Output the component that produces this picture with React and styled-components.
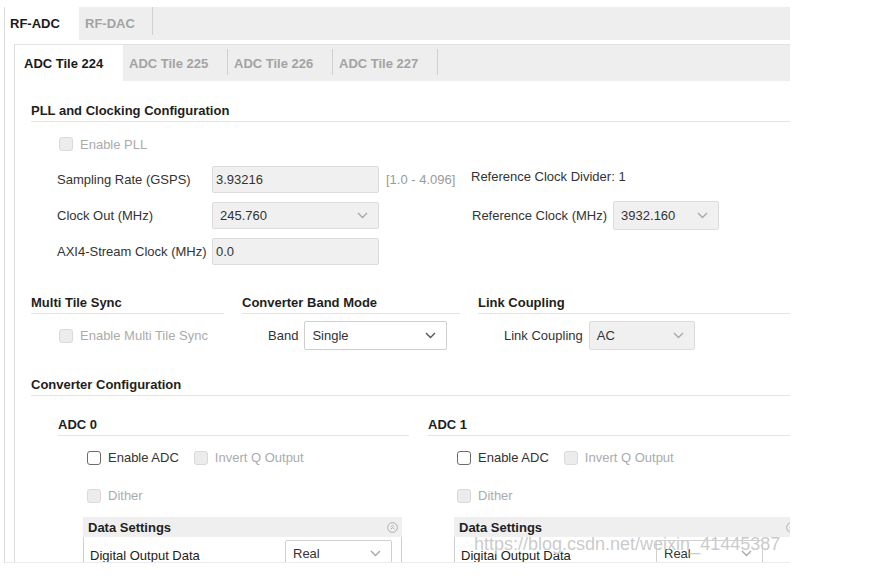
import React from "react";
import styled, { createGlobalStyle } from "styled-components";

const Global = createGlobalStyle`
  html, body { margin: 0; padding: 0; background: #ffffff; }
  body {
    font-family: "Liberation Sans", Arial, sans-serif;
    font-size: 13px;
    line-height: 15px;
    color: #333333;
  }
`;

const Frame = styled.div`
  position: relative;
  margin: 7px 0 0 4px;
  width: 786px;
  height: 556px;
  border-left: 1px solid #dcdcdc;
  border-bottom: 1px solid #ececec;
  overflow: hidden;
  box-sizing: border-box;
`;

const TopTabs = styled.div`
  display: flex;
  height: 33px;
  background: #eeeeee;
`;

const TopTab = styled.div`
  position: relative;
  display: flex;
  align-items: center;
  width: ${(p) => (p.$active ? "74px" : "74px")};
  padding-left: ${(p) => (p.$active ? "5px" : "6px")};
  box-sizing: border-box;
  background: ${(p) => (p.$active ? "#ffffff" : "#eeeeee")};
  color: ${(p) => (p.$active ? "#1a1a1a" : "#a3a3a3")};
  font-weight: bold;
  &::after {
    content: "";
    display: ${(p) => (p.$active ? "none" : "block")};
    position: absolute;
    right: 0;
    top: 0;
    bottom: 5px;
    width: 1px;
    background: #d0d0d0;
  }
`;

const Body = styled.div`
  padding: 4px 0 0 9px;
`;

const Panel = styled.div`
  border-left: 1px solid #dddddd;
  border-top: 1px solid #e2e2e2;
`;

const TileTabs = styled.div`
  display: flex;
  height: 36px;
  background: #eeeeee;
`;

const TileTab = styled.div`
  position: relative;
  display: flex;
  align-items: center;
  width: ${(p) => (p.$active ? "108px" : "105px")};
  padding-left: ${(p) => (p.$active ? "9px" : "6px")};
  box-sizing: border-box;
  background: ${(p) => (p.$active ? "#ffffff" : "#eeeeee")};
  color: ${(p) => (p.$active ? "#1a1a1a" : "#a3a3a3")};
  font-weight: bold;
  &::after {
    content: "";
    display: ${(p) => (p.$active ? "none" : "block")};
    position: absolute;
    right: 0;
    top: 4px;
    bottom: 6px;
    width: 1px;
    background: #d0d0d0;
  }
`;

const Content = styled.div`
  padding-left: 16px;
`;

const Heading = styled.div`
  margin-top: ${(p) => p.$mt || 0}px;
  padding-bottom: 3px;
  border-bottom: 1px solid #e4e4e4;
  font-weight: bold;
  color: #1e1e1e;
  white-space: nowrap;
`;

const CheckRow = styled.div`
  display: flex;
  align-items: center;
  height: ${(p) => p.$h || 15}px;
  margin-top: ${(p) => p.$mt || 0}px;
  padding-left: ${(p) => p.$indent || 0}px;
`;

const Box = styled.span`
  display: inline-block;
  width: 14px;
  height: 14px;
  box-sizing: border-box;
  border-radius: 3px;
  border: 1px solid ${(p) => (p.$enabled ? "#6c6c6c" : "#d9d9d9")};
  background: ${(p) => (p.$enabled ? "#ffffff" : "#ececec")};
  margin-left: ${(p) => p.$ml || 0}px;
  flex: none;
`;

const CheckLabel = styled.span`
  margin-left: 7px;
  color: ${(p) => (p.$enabled ? "#333333" : "#ababab")};
  white-space: nowrap;
`;

const ClockGrid = styled.div`
  display: grid;
  grid-template-columns: 155px 167px 92px auto;
  grid-template-rows: 27px 27px 27px;
  row-gap: 9px;
  margin: 15px 0 0 26px;
  align-items: center;
`;

const Label = styled.span`
  color: #333333;
  white-space: nowrap;
`;

const TextField = styled.div`
  display: flex;
  align-items: center;
  height: 27px;
  padding-left: 3px;
  box-sizing: border-box;
  background: #f0f0f0;
  border: 1px solid #dcdcdc;
  border-radius: 2px;
  color: #333333;
`;

const Select = styled.div`
  display: flex;
  align-items: center;
  justify-content: space-between;
  width: ${(p) => p.$w}px;
  height: ${(p) => p.$h || 29}px;
  padding: 0 10px 0 7px;
  box-sizing: border-box;
  background: ${(p) => (p.$enabled ? "#ffffff" : "#f0f0f0")};
  border: 1px solid ${(p) => (p.$enabled ? "#cfcfcf" : "#dcdcdc")};
  border-radius: 2px;
  color: #333333;
  flex: none;
`;

const Range = styled.span`
  padding-left: 7px;
  color: #9a9a9a;
  white-space: nowrap;
`;

const Divider = styled.span`
  align-self: start;
  margin-top: 3px;
  color: #333333;
  white-space: nowrap;
`;

const RefClock = styled.div`
  display: flex;
  align-items: center;
  gap: 6px;
  padding-left: 1px;
`;

const TriGrid = styled.div`
  display: grid;
  grid-template-columns: 193px 218px 1fr;
  column-gap: 18px;
  margin-top: 30px;
`;

const FieldRow = styled.div`
  display: flex;
  align-items: center;
  gap: 6px;
  height: 29px;
  margin-top: 7px;
  padding-left: 26px;
`;

const AdcGrid = styled.div`
  display: grid;
  grid-template-columns: 351px 1fr;
  column-gap: 19px;
  margin-left: 27px;
`;

const AdcCol = styled.div`
  min-width: 0;
`;

const DataBox = styled.div`
  margin: 14px 0 0 ${(p) => p.$ml}px;
  width: ${(p) => p.$w}px;
`;

const DataHead = styled.div`
  display: flex;
  align-items: center;
  justify-content: space-between;
  height: 20px;
  padding: 0 4px 0 5px;
  background: #efefef;
  font-weight: bold;
  color: #1e1e1e;
`;

const DataBody = styled.div`
  display: flex;
  align-items: flex-start;
  height: 30px;
  border-left: 1px solid #cfcfcf;
  border-right: 1px solid #cfcfcf;
  padding: 3px 0 0 6px;
  box-sizing: border-box;
`;

const DataLabel = styled.span`
  width: 195px;
  margin-top: 8px;
  color: #222222;
  white-space: nowrap;
`;

const Watermark = styled.div`
  position: absolute;
  left: 469px;
  top: 527px;
  font-family: "Liberation Sans", Arial, sans-serif;
  font-size: 18px;
  line-height: 20px;
  color: rgba(185, 185, 185, 0.75);
  text-shadow: 0 0 1px #ffffff;
  white-space: nowrap;
  pointer-events: none;
`;

const Chevron = ({ dark }) => (
  <svg width="11" height="7" viewBox="0 0 11 7" style={{ flex: "none" }}>
    <path
      d="M1 1 L5.5 5.5 L10 1"
      fill="none"
      stroke={dark ? "#555555" : "#a8a8a8"}
      strokeWidth="1.4"
    />
  </svg>
);

const CollapseIcon = () => (
  <svg width="11" height="11" viewBox="0 0 11 11">
    <circle cx="5.5" cy="5.5" r="4.8" fill="#f4f4f4" stroke="#a9a9a9" strokeWidth="1" />
    <path d="M3.5 5 L5.5 3.2 L7.5 5 M3.5 7.4 L5.5 5.6 L7.5 7.4" fill="none" stroke="#a0a0a0" strokeWidth="0.9" />
  </svg>
);

const Check = ({ enabled, label, ml }) => (
  <>
    <Box $enabled={enabled} $ml={ml} />
    <CheckLabel $enabled={enabled}>{label}</CheckLabel>
  </>
);

const Adc = ({ name, boxMl, boxW }) => (
  <AdcCol>
    <Heading $mt={21}>{name}</Heading>
    <CheckRow $mt={14} $indent={29}>
      <Check enabled label="Enable ADC" />
      <Check label="Invert Q Output" ml={15} />
    </CheckRow>
    <CheckRow $mt={23} $indent={29}>
      <Check label="Dither" />
    </CheckRow>
    <DataBox $ml={boxMl} $w={boxW}>
      <DataHead>
        <span>Data Settings</span>
        <CollapseIcon />
      </DataHead>
      <DataBody>
        <DataLabel>Digital Output Data</DataLabel>
        <Select $w={107} $h={26} $enabled>
          <span>Real</span>
          <Chevron />
        </Select>
      </DataBody>
    </DataBox>
  </AdcCol>
);

export default function App() {
  return (
    <>
      <Global />
      <Frame>
        <TopTabs>
          <TopTab $active>RF-ADC</TopTab>
          <TopTab>RF-DAC</TopTab>
        </TopTabs>
        <Body>
          <Panel>
            <TileTabs>
              <TileTab $active>ADC Tile 224</TileTab>
              <TileTab>ADC Tile 225</TileTab>
              <TileTab>ADC Tile 226</TileTab>
              <TileTab>ADC Tile 227</TileTab>
            </TileTabs>
            <Content>
              <Heading $mt={22}>PLL and Clocking Configuration</Heading>
              <CheckRow $mt={15} $indent={28} $h={14}>
                <Check label="Enable PLL" />
              </CheckRow>
              <ClockGrid>
                <Label>Sampling Rate (GSPS)</Label>
                <TextField>3.93216</TextField>
                <Range>[1.0 - 4.096]</Range>
                <Divider>Reference Clock Divider: 1</Divider>

                <Label>Clock Out (MHz)</Label>
                <Select $w={167} $h={27}>
                  <span>245.760</span>
                  <Chevron />
                </Select>
                <span />
                <RefClock>
                  <Label>Reference Clock (MHz)</Label>
                  <Select $w={106}>
                    <span>3932.160</span>
                    <Chevron />
                  </Select>
                </RefClock>

                <Label>AXI4-Stream Clock (MHz)</Label>
                <TextField>0.0</TextField>
              </ClockGrid>

              <TriGrid>
                <div>
                  <Heading>Multi Tile Sync</Heading>
                  <CheckRow $mt={7} $h={29} $indent={28}>
                    <Check label="Enable Multi Tile Sync" />
                  </CheckRow>
                </div>
                <div>
                  <Heading>Converter Band Mode</Heading>
                  <FieldRow>
                    <Label>Band</Label>
                    <Select $w={143} $enabled>
                      <span>Single</span>
                      <Chevron dark />
                    </Select>
                  </FieldRow>
                </div>
                <div>
                  <Heading>Link Coupling</Heading>
                  <FieldRow>
                    <Label>Link Coupling</Label>
                    <Select $w={106}>
                      <span>AC</span>
                      <Chevron />
                    </Select>
                  </FieldRow>
                </div>
              </TriGrid>

              <Heading $mt={27}>Converter Configuration</Heading>
              <AdcGrid>
                <Adc name="ADC 0" boxMl={25} boxW={319} />
                <Adc name="ADC 1" boxMl={26} boxW={347} />
              </AdcGrid>
            </Content>
          </Panel>
        </Body>
        <Watermark>https://blog.csdn.net/weixin_41445387</Watermark>
      </Frame>
    </>
  );
}
